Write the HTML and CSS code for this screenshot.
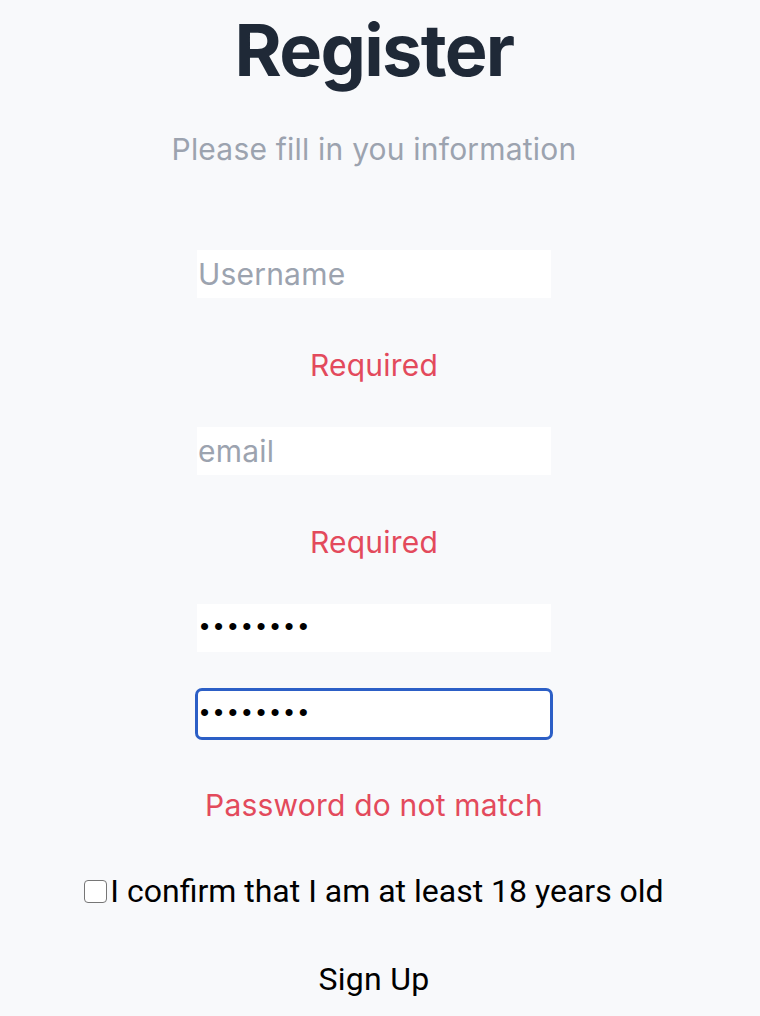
FILE: index.html
```html
<!DOCTYPE html>
<html lang="en">
<head>
<meta charset="utf-8">
<title>Register</title>
<link rel="stylesheet" href="styles.css">
</head>
<body>
<main class="page">
  <h1 class="title">Register</h1>
  <p class="subtitle">Please fill in you information</p>
  <form class="form">
    <input class="field" type="text" placeholder="Username">
    <p class="error">Required</p>
    <input class="field" type="email" placeholder="email">
    <p class="error">Required</p>
    <input class="field" type="password" value="password">
    <input class="field field-focus" type="password" value="passwore">
    <p class="error error-pw">Password do not match</p>
    <label class="confirm"><input class="check" type="checkbox">I confirm that I am at least 18 years old</label>
    <button class="submit" type="button">Sign Up</button>
  </form>
</main>
</body>
</html>
```
FILE: styles.css
```css
html, body {
  margin: 0;
  padding: 0;
  background: #f8f9fb;
}
body {
  font-family: Inter, "Noto Sans", sans-serif;
  width: 760px;
  height: 1016px;
  overflow: hidden;
}
.page {
  display: flex;
  flex-direction: column;
  align-items: center;
  width: 748px;
}
.title {
  margin: 12px 0 0;
  font-size: 72px;
  line-height: 76px;
  font-weight: 700;
  color: #1f2937;
  letter-spacing: -1.7px;
}
.subtitle {
  margin: 41px 0 0;
  font-size: 30px;
  line-height: 40px;
  letter-spacing: 0.2px;
  color: #9ca3af;
}
.form {
  display: flex;
  flex-direction: column;
  align-items: center;
  margin-top: 81px;
}
.field {
  display: block;
  box-sizing: border-box;
  width: 354px;
  height: 48px;
  padding: 0 1px;
  border: none;
  background: #ffffff;
  font-family: Inter, "Noto Sans", sans-serif;
  font-size: 30px;
  letter-spacing: 0.2px;
  color: #000;
  outline: none;
}
.field::placeholder {
  color: #9ca3af;
}
.field[type="password"] {
  font-family: "Liberation Sans", sans-serif;
  font-size: 26px;
  letter-spacing: 5px;
  padding: 0 0 3px 3px;
}
.field + .field {
  margin-top: 38px;
}
.field-focus {
  border-radius: 5px;
  outline: 3px solid #2c5fc6;
  outline-offset: -1px;
}
.error {
  margin: 47px 0 42px;
  font-size: 30px;
  line-height: 40px;
  letter-spacing: 0.2px;
  color: #e34a5c;
}
.error-pw {
  margin: 47px 0 46px;
}
.confirm {
  display: flex;
  align-items: center;
  font-family: Roboto, "Liberation Sans", sans-serif;
  font-size: 32px;
  line-height: 40px;
  color: #000;
}
.check {
  appearance: none;
  -webkit-appearance: none;
  width: 23px;
  height: 23px;
  margin: 0 3px 0 0;
  border: 1.5px solid #767676;
  border-radius: 4px;
  background: #fff;
  box-sizing: border-box;
}
.submit {
  margin-top: 48px;
  padding: 0;
  border: none;
  background: none;
  font-family: Roboto, "Liberation Sans", sans-serif;
  font-size: 32px;
  line-height: 40px;
  letter-spacing: 0.3px;
  color: #000;
}
```
